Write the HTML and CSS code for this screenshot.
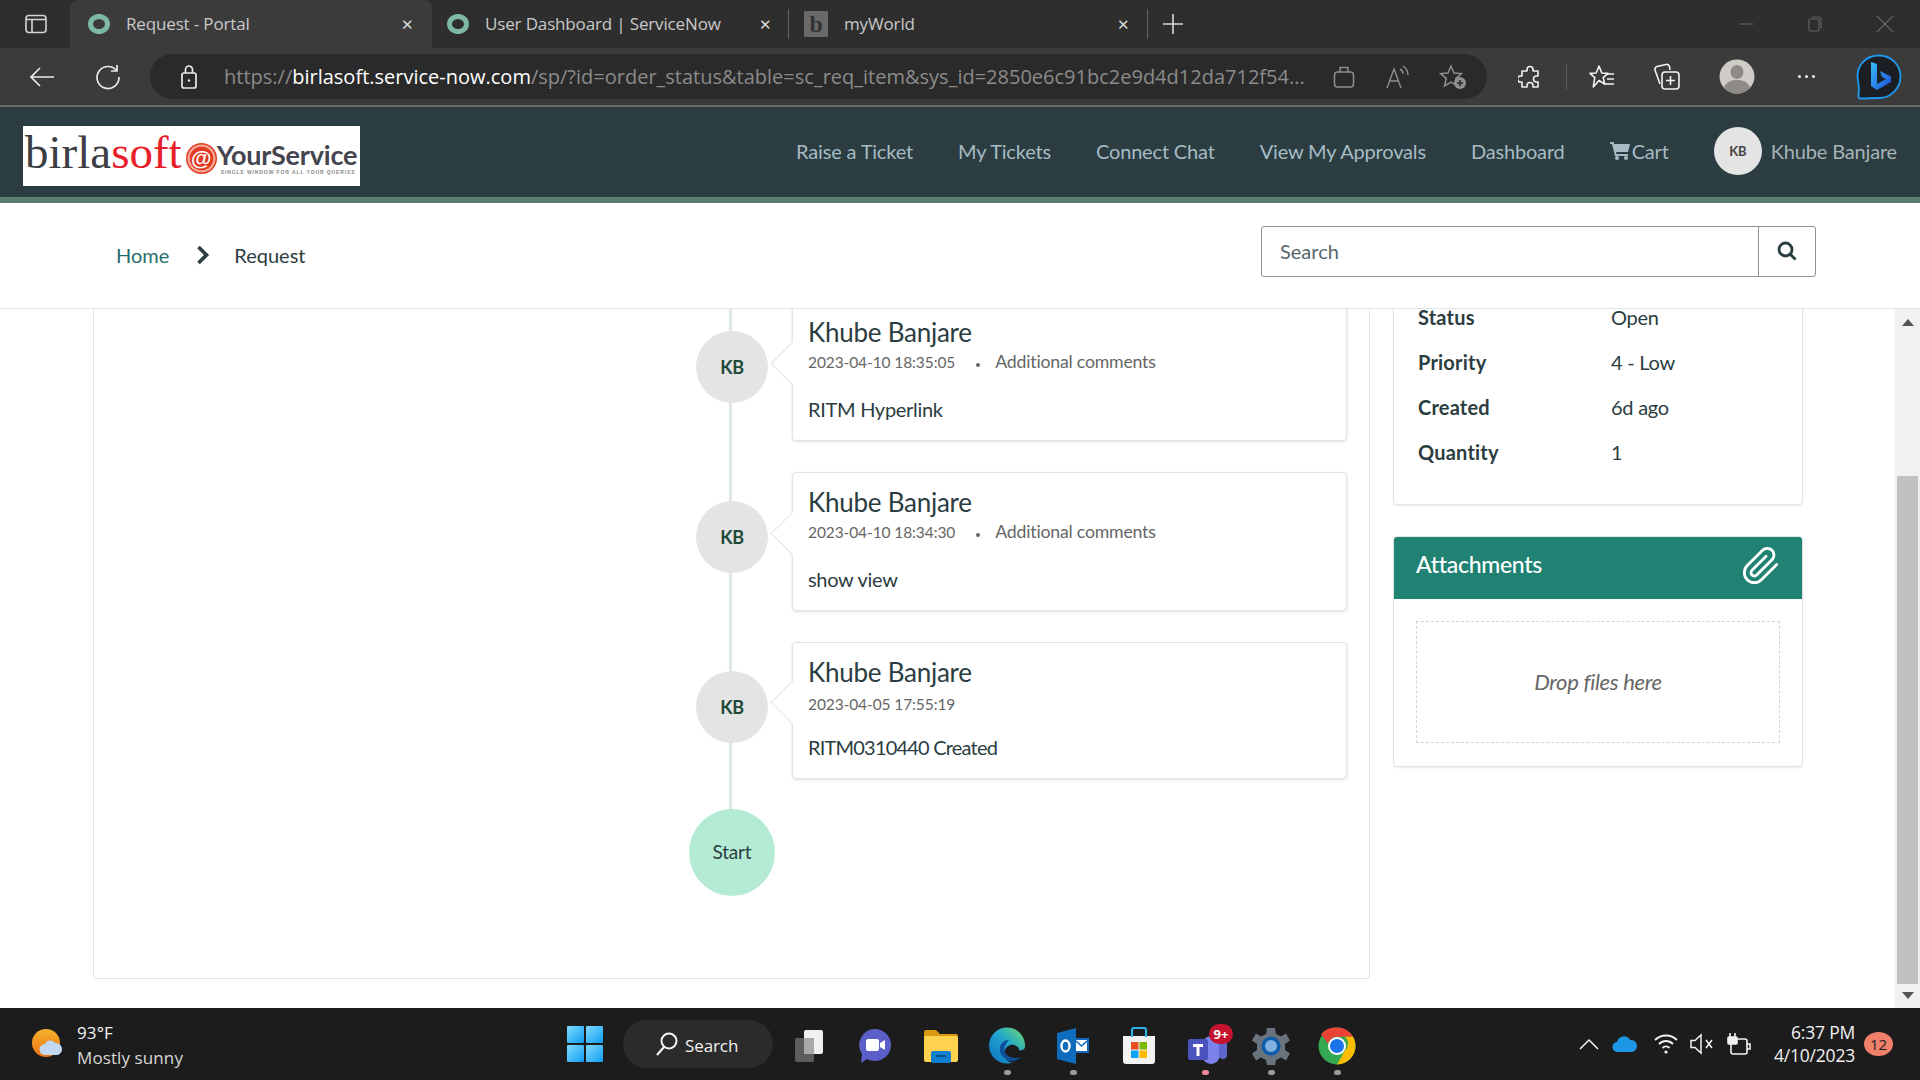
FILE: index.html
```html
<!DOCTYPE html>
<html lang="en">
<head>
<meta charset="utf-8">
<title>Request - Portal</title>
<link rel="stylesheet" href="styles.css">
</head>
<body>
<div class="screen">
  <svg class="defs" width="0" height="0" aria-hidden="true">
    <defs>
      <linearGradient id="gWin" x1="0" y1="0" x2="1" y2="1"><stop offset="0" stop-color="#7fdcff"/><stop offset="1" stop-color="#0f9cf0"/></linearGradient>
      <linearGradient id="gEdge" x1="0" y1="1" x2="1" y2="0"><stop offset="0" stop-color="#0b6fc0"/><stop offset="0.55" stop-color="#22a6cc"/><stop offset="1" stop-color="#6fdc6a"/></linearGradient>
      <linearGradient id="gSun" x1="0" y1="0" x2="0" y2="1"><stop offset="0" stop-color="#f5b32c"/><stop offset="1" stop-color="#ee6f12"/></linearGradient>
      <linearGradient id="gBing" x1="0" y1="0" x2="1" y2="1"><stop offset="0" stop-color="#37bdf8"/><stop offset="1" stop-color="#1d4ed8"/></linearGradient>
    </defs>
  </svg>

  <div class="tabbar">
    <div class="tab-side">
      <svg width="24" height="20" viewBox="0 0 24 20" fill="none" stroke="#d5d5d5" stroke-width="1.6"><rect x="2" y="1.5" width="20" height="17" rx="3"/><path d="M2 5.5h20M8 5.5v13"/></svg>
    </div>
    <div class="tab tab-active">
      <svg class="fav" width="22" height="20" viewBox="0 0 22 20"><ellipse cx="11" cy="10" rx="8.5" ry="7.6" fill="none" stroke="#7db8a4" stroke-width="5"/></svg>
      <span class="tab-title">Request - Portal</span>
      <span class="tab-x">✕</span>
    </div>
    <div class="tab tab-second">
      <svg class="fav" width="22" height="20" viewBox="0 0 22 20"><ellipse cx="11" cy="10" rx="8.5" ry="7.6" fill="none" stroke="#7db8a4" stroke-width="5"/></svg>
      <span class="tab-title">User Dashboard | ServiceNow</span>
      <span class="tab-x">✕</span>
    </div>
    <div class="tab-sep"></div>
    <div class="tab tab-third">
      <span class="fav-b">b</span>
      <span class="tab-title">myWorld</span>
      <span class="tab-x">✕</span>
    </div>
    <div class="tab-sep"></div>
    <svg class="tab-plus" width="22" height="22" viewBox="0 0 22 22" stroke="#d5d5d5" stroke-width="1.6"><path d="M11 1v20M1 11h20"/></svg>
    <div class="winctl">
      <svg width="16" height="16" viewBox="0 0 16 16" stroke="#636363" stroke-width="1.2" fill="none"><path d="M1 8h14"/></svg>
      <svg width="16" height="18" viewBox="0 0 16 18" stroke="#636363" stroke-width="1.2" fill="none"><rect x="2" y="4" width="10" height="12" rx="1.5"/><path d="M5 2h7a2 2 0 0 1 2 2v9"/></svg>
      <svg width="18" height="18" viewBox="0 0 18 18" stroke="#636363" stroke-width="1.2" fill="none"><path d="M1 1l16 16M17 1L1 17"/></svg>
    </div>
  </div>

  <div class="toolbar">
    <svg class="tb-back" width="26" height="22" viewBox="0 0 26 22" fill="none" stroke="#eaeaea" stroke-width="1.7"><path d="M25 11H2M11 2l-9 9 9 9"/></svg>
    <svg class="tb-reload" width="26" height="26" viewBox="0 0 26 26" fill="none" stroke="#eaeaea" stroke-width="1.7"><path d="M21.5 6.5A11 11 0 1 0 24 13"/><path d="M22 1v6h-6"/></svg>
    <div class="address">
      <svg class="lock" width="18" height="24" viewBox="0 0 18 24" fill="none" stroke="#eaeaea" stroke-width="1.7"><rect x="2" y="8" width="14" height="15" rx="2"/><path d="M5.5 8V4.5a3.5 3.5 0 0 1 7 0V8"/><circle cx="9" cy="15.5" r="1.2" fill="#eaeaea" stroke="none"/></svg>
      <div class="url">https://<b>birlasoft.service-now.com</b>/sp/?id=order_status&amp;table=sc_req_item&amp;sys_id=2850e6c91bc2e9d4d12da712f54...</div>
      <div class="addr-icons">
        <svg width="22" height="24" viewBox="0 0 22 24" fill="none" stroke="#8f8f8f" stroke-width="1.5"><rect x="1.5" y="7" width="19" height="15" rx="3"/><path d="M7 7V2.5h8V7"/></svg>
        <svg width="24" height="24" viewBox="0 0 24 24" fill="none" stroke="#8f8f8f" stroke-width="1.4"><path d="M2 23L9 4l7 19M4.5 16h9"/><path d="M15 4c2 1 3 3 3 5M18 1c3 2 5 5 5 9"/></svg>
        <svg width="28" height="26" viewBox="0 0 28 26" fill="none" stroke="#8f8f8f" stroke-width="1.5"><path d="M12 2l3 7 7.500 .6-5.700 4.800 1.800 7.400L12 18l-6.500 4 1.800-7.600L1.500 9.600 9 9z"/><circle cx="21" cy="19" r="6" fill="#8f8f8f" stroke="none"/><path d="M21 16v6M18 19h6" stroke="#2b2b2b" stroke-width="1.6"/></svg>
      </div>
    </div>
    <div class="tb-right">
      <svg class="tb-ext" width="24" height="26" viewBox="0 0 24 26" fill="none" stroke="#f2f2f2" stroke-width="1.6" stroke-linejoin="round"><path d="M9 5.500a3 3 0 0 1 6 0V7h5v5h-1.500a3 3 0 0 0 0 6H20v5h-5v-1.500a3 3 0 0 0-6 0V23H4v-5H2.500a3 3 0 0 1 0-6H4V7h5z"/></svg>
      <div class="tb-sep"></div>
      <svg class="tb-favs" width="26" height="26" viewBox="0 0 26 26" fill="none" stroke="#f2f2f2" stroke-width="1.6" stroke-linejoin="round"><path d="M10 2l2.800 7 6.200 .4-4.800 4.200 1.500 6.400-5.700-3.500L4.300 23l1.500-9.400L1 9.400 7.200 9z"/><path d="M17 10h8M18 15h7M15 20h10"/></svg>
      <svg class="tb-coll" width="28" height="28" viewBox="0 0 28 28" fill="none" stroke="#f2f2f2" stroke-width="1.6"><path d="M7 21L2 7a3 3 0 0 1 2-3.500L13 1.500a3 3 0 0 1 3.500 2L17 7"/><rect x="9" y="9" width="17" height="17" rx="3"/><path d="M17.500 13v9M13 17.500h9"/></svg>
      <svg class="tb-prof" width="36" height="35" viewBox="0 0 36 35"><ellipse cx="18" cy="17.500" rx="17.500" ry="17" fill="#cfccc7"/><ellipse cx="18" cy="13" rx="6.500" ry="7" fill="#8e8b86"/><path d="M5 28c3-6 8-7 13-7s10 1 13 7c-3 4-8 7-13 7s-10-3-13-7z" fill="#8e8b86"/></svg>
      <div class="tb-dots"><i></i><i></i><i></i></div>
      <svg class="tb-bing" width="46" height="46" viewBox="0 0 46 46"><path d="M23 1.500C10 1.500 1.500 11 1.500 22c0 6 2.500 9 1 19-.3 3 0 3.500 3 3.500C12 44.500 16 44 23 44 35 44 44.500 34 44.500 22.500S35 1.500 23 1.500z" fill="#1b1f24" stroke="#1d9bf0" stroke-width="1.800"/><path d="M15 8l6 2v20l9-5-4-2-2-6 11 5.500v5.500l-14 8-6-4z" fill="url(#gBing)"/></svg>
    </div>
  </div>

  <header class="nav">
    <a class="logo">
      <span class="logo-birla">birla<em>soft</em></span>
      <span class="logo-at">@</span>
      <span class="logo-right">
        <span class="logo-ys">YourService</span>
        <span class="logo-tag">SINGLE WINDOW FOR ALL YOUR QUERIES</span>
      </span>
    </a>
    <nav class="nav-links">
      <a>Raise a Ticket</a>
      <a>My Tickets</a>
      <a>Connect Chat</a>
      <a>View My Approvals</a>
      <a>Dashboard</a>
      <a class="nav-cart"><svg width="20" height="18" viewBox="0 0 20 18" fill="#a6bbc4"><path d="M0 0h3.500l.6 2H20l-2 8H6l.5 2H18v2H5L2 2H0z"/><circle cx="7" cy="16" r="2"/><circle cx="16" cy="16" r="2"/></svg>Cart</a>
      <a class="nav-user"><span class="nav-avatar">KB</span>Khube Banjare</a>
    </nav>
  </header>

  <div class="subhead">
    <div class="crumbs">
      <a class="crumb-home">Home</a>
      <svg width="14" height="20" viewBox="0 0 14 20" fill="none" stroke="#2b3d41" stroke-width="3.600"><path d="M2.500 2l8 8-8 8"/></svg>
      <span class="crumb-cur">Request</span>
    </div>
    <div class="search">
      <span class="search-input">Search</span>
      <span class="search-btn"><svg width="20" height="20" viewBox="0 0 20 20" fill="none" stroke="#2b3d41" stroke-width="2.800"><circle cx="8.500" cy="8.500" r="6.500"/><path d="M13.500 13.500l5 5"/></svg></span>
    </div>
  </div>

  <div class="viewport">
    <main class="scroller">
      <div class="columns">
        <section class="panel">
          <div class="timeline">
            <article class="entry">
              <div class="avatar">KB</div>
              <div class="card">
                <h3>Khube Banjare</h3>
                <div class="meta"><span class="stamp">2023-04-10 18:35:05</span><i class="dot"></i><span>Additional comments</span></div>
                <p>RITM Hyperlink</p>
              </div>
            </article>
            <article class="entry">
              <div class="avatar">KB</div>
              <div class="card">
                <h3>Khube Banjare</h3>
                <div class="meta"><span class="stamp">2023-04-10 18:34:30</span><i class="dot"></i><span>Additional comments</span></div>
                <p>show view</p>
              </div>
            </article>
            <article class="entry entry-last">
              <div class="avatar">KB</div>
              <div class="card card-short">
                <h3>Khube Banjare</h3>
                <div class="meta"><span class="stamp">2023-04-05 17:55:19</span></div>
                <p>RITM0310440 Created</p>
              </div>
            </article>
            <div class="start">Start</div>
          </div>
        </section>
        <aside class="side">
          <section class="box details">
            <div class="row"><b>Status</b><span>Open</span></div>
            <div class="row"><b>Priority</b><span>4 - Low</span></div>
            <div class="row"><b>Created</b><span>6d ago</span></div>
            <div class="row"><b>Quantity</b><span>1</span></div>
          </section>
          <section class="box attach">
            <div class="attach-head">
              <span>Attachments</span>
              <svg width="40" height="40" viewBox="0 0 24 24" fill="none" stroke="#fff" stroke-width="1.700" stroke-linecap="round" stroke-linejoin="round"><path d="M21.440 11.050l-9.190 9.190a6 6 0 0 1-8.490-8.490l9.190-9.190a4 4 0 0 1 5.660 5.660l-9.200 9.190a2 2 0 0 1-2.830-2.830l8.490-8.480"/></svg>
            </div>
            <div class="attach-body"><div class="drop">Drop files here</div></div>
          </section>
        </aside>
      </div>
    </main>
    <div class="scrollbar">
      <i class="sb-up"></i>
      <div class="sb-track"><div class="sb-thumb"></div></div>
      <i class="sb-down"></i>
    </div>
  </div>

  <footer class="taskbar">
    <div class="weather">
      <svg width="34" height="32" viewBox="0 0 34 32"><circle cx="15" cy="15" r="14" fill="url(#gSun)"/><path d="M14 27a5.500 5.500 0 0 1 0-11c1-4 8-5 10-1 5 0 7 3 7 6.500S28 27 25 27z" fill="#c3d9f2"/></svg>
      <div class="weather-txt"><span>93°F</span><span class="w-sub">Mostly sunny</span></div>
    </div>
    <div class="tb-center">
      <svg class="win" width="36" height="36" viewBox="0 0 36 36" fill="url(#gWin)"><rect width="17" height="17" rx="1"/><rect x="19" width="17" height="17" rx="1"/><rect y="19" width="17" height="17" rx="1"/><rect x="19" y="19" width="17" height="17" rx="1"/></svg>
      <div class="task-search">
        <svg width="24" height="26" viewBox="0 0 24 26" fill="none" stroke="#f5f5f5" stroke-width="2"><circle cx="14" cy="10" r="7.500"/><path d="M9 16l-7 8"/></svg>
        <span>Search</span>
      </div>
      <div class="slot"><svg width="30" height="34" viewBox="0 0 30 34"><rect x="1" y="9" width="19" height="24" rx="2" fill="#5d5d5d"/><rect x="10" y="1" width="19" height="24" rx="2" fill="#f1f1f1"/><rect x="10" y="9" width="10" height="16" fill="#a9a9a9"/></svg></div>
      <div class="slot"><svg width="34" height="36" viewBox="0 0 34 36"><path d="M17 1a16 16 0 0 1 0 32c-3 0-6-1-8-2l-6 4 1-9A16 16 0 0 1 17 1z" fill="#5b5fc7"/><rect x="8" y="11" width="13" height="12" rx="2" fill="#fff"/><path d="M22 15l5-3v10l-5-3z" fill="#fff"/></svg></div>
      <div class="slot"><svg width="36" height="34" viewBox="0 0 36 34"><path d="M1 3a2 2 0 0 1 2-2h10l4 4h16a2 2 0 0 1 2 2v4H1z" fill="#d79a10"/><rect x="1" y="7" width="34" height="26" rx="2" fill="#fcd24f"/><rect x="8" y="22" width="20" height="12" rx="2" fill="#0f7fd0"/><path d="M13 27h10" stroke="#0b4f88" stroke-width="2"/></svg></div>
      <div class="slot slot-on"><svg width="36" height="37" viewBox="0 0 36 37"><circle cx="18" cy="18.500" r="18" fill="url(#gEdge)"/><path d="M16 23c1-3 5-6 9-5 4 1 5 3 5 5 2 1 4 0 6-2 0 4-1 8-3 11-3 4-11 5-14 2-3-2-4-8-3-11z" fill="#1c1c1c"/><path d="M20 13c-6 0-10 5-9 11 1 6 7 11 14 10 3-1 5-2 7-4-5 2-11 1-14-2-3-3-4-7-1-11 1-2 2-3 3-4z" fill="#0e4f9a"/></svg><i></i></div>
      <div class="slot slot-on"><svg width="34" height="38" viewBox="0 0 34 38"><path d="M1 6L20 1v36L1 32z" fill="#0f6cbd"/><rect x="18" y="11" width="15" height="15" fill="#0f6cbd"/><path d="M20 13h11v11H20z" fill="#fff"/><path d="M20 14l5.500 5 5.500-5" fill="none" stroke="#0f6cbd" stroke-width="1.600"/><ellipse cx="9.500" cy="19" rx="4" ry="5.500" fill="none" stroke="#fff" stroke-width="2.400"/></svg><i></i></div>
      <div class="slot"><svg width="36" height="38" viewBox="0 0 36 38"><path d="M2 9h32v25a3 3 0 0 1-3 3H5a3 3 0 0 1-3-3z" fill="#f2f2f2"/><path d="M11 10V3a2 2 0 0 1 2-2h10a2 2 0 0 1 2 2v7" fill="none" stroke="#2bb3e8" stroke-width="2.200"/><rect x="10" y="15" width="7.500" height="7.500" fill="#e84c23"/><rect x="18.500" y="15" width="7.500" height="7.500" fill="#7db800"/><rect x="10" y="23.500" width="7.500" height="7.500" fill="#0ca4ef"/><rect x="18.500" y="23.500" width="7.500" height="7.500" fill="#fbb900"/></svg></div>
      <div class="slot slot-pink">
        <svg class="teams" width="46" height="42" viewBox="0 0 46 42"><circle cx="30" cy="10" r="6" fill="#7b83eb"/><rect x="16" y="11" width="18" height="28" rx="9" fill="#7b83eb"/><rect x="33" y="14" width="8" height="20" rx="4" fill="#5f66c9"/><rect x="2" y="14" width="20" height="21" rx="2" fill="#4b53bc"/><path d="M7 19h10v3h-3.500v9h-3v-9H7z" fill="#fff"/></svg>
        <span class="badge-red">9+</span><i></i>
      </div>
      <div class="slot slot-on"><svg width="38" height="38" viewBox="0 0 38 38"><path d="M15 1h8l1 6 5 2.500 5-3 4 7-5 3.500v6l5 3.500-4 7-5-3-5 2.500-1 6h-8l-1-6-5-2.500-5 3-4-7 5-3.500v-6l-5-3.500 4-7 5 3 5-2.500z" fill="#69737d"/><circle cx="19" cy="19" r="9.500" fill="#0f5cab"/><circle cx="19" cy="19" r="6" fill="#7fb1e2"/></svg><i></i></div>
      <div class="slot slot-on"><svg width="38" height="38" viewBox="0 0 38 38"><circle cx="19" cy="19" r="18.500" fill="#34a853"/><path d="M19 .5a18.500 18.500 0 0 1 16 9.300H19a9.300 9.300 0 0 0-9 7L3 7A18.500 18.500 0 0 1 19 .5z" fill="#ea4335"/><path d="M35 9.800A18.500 18.500 0 0 1 19 37.500l8-14a9.300 9.300 0 0 0 0-13.700z" fill="#fbbc04"/><circle cx="19" cy="19" r="9" fill="#fff"/><circle cx="19" cy="19" r="7" fill="#1a73e8"/></svg><i></i></div>
    </div>
    <div class="tray">
      <svg class="tray-up" width="20" height="12" viewBox="0 0 20 12" fill="none" stroke="#f2f2f2" stroke-width="1.500"><path d="M1 11l9-9 9 9"/></svg>
      <svg class="tray-cloud" width="26" height="18" viewBox="0 0 26 18"><path d="M6 17a5 5 0 0 1-1-10 7 7 0 0 1 13-2 6 6 0 0 1 2 12z" fill="#1e96e8"/></svg>
      <svg class="tray-wifi" width="24" height="22" viewBox="0 0 24 22" fill="none" stroke="#f2f2f2" stroke-width="1.800"><path d="M1 7c6-6 16-6 22 0M5 11c4-4 10-4 14 0M8.500 15c2-2 5-2 7 0"/><circle cx="12" cy="19" r="1.600" fill="#f2f2f2" stroke="none"/></svg>
      <svg class="tray-vol" width="24" height="22" viewBox="0 0 24 22" fill="none" stroke="#f2f2f2" stroke-width="1.500"><path d="M1 7.500h4L11 2v18l-6-5.500H1z"/><path d="M16 7l6 8M22 7l-6 8"/></svg>
      <svg width="26" height="24" viewBox="0 0 26 24" fill="none" stroke="#f2f2f2" stroke-width="1.600"><rect x="6" y="7" width="16" height="15" rx="2"/><path d="M22 12h3v5h-3"/><path d="M5 1v4M10 1v4" /><rect x="3" y="5" width="9" height="7" rx="1" fill="#f2f2f2"/></svg>
      <div class="clock"><span>6:37 PM</span><span>4/10/2023</span></div>
      <span class="notif">12</span>
    </div>
  </footer>
</div>
</body>
</html>
```
FILE: styles.css
```css
* { box-sizing: border-box; }
html, body { margin: 0; padding: 0; }
body { width: 1920px; height: 1080px; overflow: hidden; font-family: "Lato", "Noto Sans", sans-serif; background: #fff; color: #2b3d41; }
.screen { width: 1920px; height: 1080px; display: flex; flex-direction: column; overflow: hidden; }
.defs { position: absolute; }

/* browser tabs */
.tabbar { height: 48px; flex: none; display: flex; align-items: center; background: #2e2e2e; font-family: "Open Sans", "Noto Sans", sans-serif; font-size: 17px; letter-spacing: -0.15px; color: #c9c9c9; }
.tab-side { width: 70px; padding-left: 24px; display: flex; align-items: center; }
.tab { height: 48px; width: 356px; display: flex; align-items: center; padding: 0 16px 0 18px; }
.tab-active { width: 362px; padding-right: 18px; background: #3b3b3b; border-radius: 8px 8px 0 0; }
.tab-second { padding-left: 15px; }
.tab-third { width: 358px; padding-left: 15px; padding-right: 17px; }
.tab .fav { margin-right: 16px; flex: none; }
.tab-title { flex: 1; white-space: nowrap; margin-bottom: 2px; }
.tab-x { font-size: 15px; color: #d8d8d8; flex: none; }
.tab-sep { width: 1px; height: 30px; background: #666; flex: none; }
.fav-b { width: 24px; height: 26px; margin-right: 16px; background: #6a6a6a; color: #333; font: 700 24px/26px "Liberation Serif", serif; text-align: center; flex: none; }
.tab-plus { margin-left: 14px; }
.winctl { margin-left: auto; display: flex; align-items: center; gap: 53px; padding-right: 26px; }

/* browser toolbar */
.toolbar { height: 57px; flex: none; display: flex; align-items: center; background: #3b3b3b; padding-right: 20px; border: 0; }
.tb-back { margin-left: 29px; flex: none; }
.tb-reload { margin-left: 40px; flex: none; }
.address { margin-left: 29px; width: 1337px; height: 45px; flex: none; display: flex; align-items: center; background: #2a2a2a; border-radius: 23px; padding-left: 30px; }
.lock { flex: none; }
.url { width: 1083px; flex: none; margin-left: 26px; font-family: "Open Sans", "Noto Sans", sans-serif; font-size: 20px; letter-spacing: 0; color: #8b8b8b; white-space: nowrap; overflow: hidden; }
.url b { font-weight: 400; color: #fff; }
.addr-icons { display: flex; align-items: center; gap: 30px; margin-left: 26px; }
.tb-right { flex: 1; display: flex; align-items: center; padding-left: 31px; }
.tb-sep { width: 1px; height: 26px; background: #5c5c5c; margin: 0 22px 0 24px; }
.tb-coll { margin-left: 38px; }
.tb-prof { margin-left: 38px; }
.tb-dots { display: flex; gap: 4px; margin-left: 43px; }
.tb-dots i { width: 3px; height: 3px; border-radius: 50%; background: #f2f2f2; }
.tb-bing { margin-left: 41px; }

/* site nav */
.nav { height: 98px; flex: none; display: flex; align-items: center; justify-content: space-between; background: #2b3d41; border-top: 2px solid #6b6b6b; border-bottom: 6px solid #5a7d6f; padding: 0 23px 0 23px; }
.logo { width: 337px; height: 60px; margin-top: 8px; background: #fff; display: flex; align-items: center; padding-left: 2px; overflow: hidden; }
.logo-birla { font: 400 47px/60px "Liberation Serif", serif; color: #3d3d44; margin-top: -8px; }
.logo-birla em { font-style: normal; color: #e8202a; }
.logo-at { width: 31px; height: 31px; margin-left: 4px; margin-top: 4px; flex: none; border-radius: 50%; background: radial-gradient(circle, #e33b22 52%, #f4a390 55%, #f4a390 62%, #e33b22 66%); color: #fff; font: 700 21px/30px "Liberation Sans", sans-serif; text-align: center; }
.logo-right { display: flex; flex-direction: column; margin-top: 3px; }
.logo-ys { font: 700 27px/28px "Lato", sans-serif; letter-spacing: -0.2px; color: #45454f; }
.logo-tag { font: 700 5px/6px "Liberation Sans", sans-serif; letter-spacing: 0.9px; color: #888; padding-left: 4px; white-space: nowrap; }
.nav-links { display: flex; align-items: center; gap: 45px; padding-bottom: 2px; font-size: 20px; letter-spacing: -0.17px; color: #a6bbc4; white-space: nowrap; }
.nav-links a { display: flex; align-items: center; }
.nav-cart svg { margin-right: 2px; }
.nav-user { color: #a6b4b8; margin-left: 0; }
.nav-avatar { width: 48px; height: 48px; margin-right: 9px; border-radius: 50%; background: #e4e4e4; color: #444; font-size: 13px; font-weight: 700; display: flex; align-items: center; justify-content: center; }

/* breadcrumb: sits over the top edge of the scrolled area */
.subhead { position: relative; z-index: 1; height: 106px; flex: none; display: flex; align-items: center; justify-content: space-between; background: #fff; border-bottom: 1px solid #dfe6e6; padding: 0 104px 0 116px; }
.crumbs { display: flex; align-items: center; padding-bottom: 2px; font-size: 20px; letter-spacing: 0; }
.crumb-home { color: #1f6e6a; }
.crumbs svg { margin: 0 24px 0 27px; }
.crumb-cur { color: #2b3d41; }
.search { width: 555px; height: 51px; display: flex; border: 1px solid #8a9599; border-radius: 3px; margin-top: -9px; }
.search-input { flex: 1; padding-left: 18px; font-size: 20px; line-height: 49px; letter-spacing: 0; color: #55676b; }
.search-btn { width: 57px; border-left: 1px solid #8a9599; display: flex; align-items: center; justify-content: center; }

/* scrolled content */
.viewport { height: 707px; margin-top: -8px; flex: none; display: flex; overflow: hidden; background: #fff; }
.scroller { flex: 1; overflow: hidden; padding-left: 93px; }
.columns { display: flex; align-items: flex-start; gap: 23px; margin-top: -21px; }
.panel { width: 1277px; background: #fff; border: 1px solid #dfe6e6; border-radius: 4px; padding: 21px 22px 82px 595px; }
.timeline { position: relative; display: flex; flex-direction: column; gap: 31px; }
.timeline::before { content: ""; position: absolute; left: 40px; top: 0; bottom: 40px; width: 3px; background: #dfe8e8; }
.entry { display: flex; align-items: flex-start; position: relative; }
.entry-last { margin-bottom: -1px; }
.avatar { width: 72px; height: 72px; margin: 29px 14px 0 7px; flex: none; border-radius: 50%; background: #e4e4e4; color: #1f4a3a; font-size: 18px; font-weight: 700; letter-spacing: -0.4px; display: flex; align-items: center; justify-content: center; position: relative; }
.card { position: relative; margin-left: 10px; width: 556px; height: 139px; background: #fff; border: 1px solid #dfe6e6; border-radius: 4px; box-shadow: 0 1px 3px rgba(0, 0, 0, .12); padding: 14px 15px 15px 15px; }
.card::before { content: ""; position: absolute; left: -16px; top: 45px; width: 30px; height: 30px; background: #fff; border-left: 1px solid #dfe6e6; border-bottom: 1px solid #dfe6e6; transform: rotate(45deg); }
.card h3 { position: relative; margin: 0; font-size: 26px; font-weight: 400; line-height: 30px; letter-spacing: -0.25px; color: #2b3d41; }
.meta { position: relative; display: flex; align-items: center; margin-top: 5px; font-size: 17.7px; line-height: 20px; letter-spacing: -0.2px; color: #666; }
.stamp { font-size: 15.5px; letter-spacing: -0.1px; }
.dot { width: 4px; height: 4px; margin: 5px 15px 0 21px; border-radius: 50%; background: #666; }
.card p { position: relative; margin: 24px 0 0; font-size: 20px; line-height: 26px; letter-spacing: -0.3px; color: #2b3d41; }
.card-short { height: 137px; }
.card-short::before { top: 44px; }
.card-short .meta { margin-top: 7px; }
.card-short p { margin-top: 20px; letter-spacing: -0.8px; }
.start { position: relative; width: 86px; height: 87px; padding-bottom: 2px; border-radius: 50%; background: #b5ebd5; color: #2b3d41; font-size: 19px; letter-spacing: -0.2px; display: flex; align-items: center; justify-content: center; }

/* right column */
.side { width: 410px; flex: none; display: flex; flex-direction: column; gap: 31px; }
.box { background: #fff; border: 1px solid #dfe6e6; border-radius: 4px; box-shadow: 0 1px 2px rgba(0, 0, 0, .08); overflow: hidden; }
.details { padding: 13px 24px 30px; }
.row { height: 45px; display: flex; align-items: center; font-size: 20px; line-height: 18px; letter-spacing: -0.25px; color: #2b3d41; }
.row b { width: 193px; font-weight: 700; letter-spacing: 0.2px; }
.attach-head { height: 62px; display: flex; align-items: center; justify-content: space-between; background: #1f8272; color: #fff; font-size: 23px; font-weight: 700; letter-spacing: -0.3px; padding: 0 21px 4px 22px; }
.attach-head span { font-weight: 500; margin-bottom: 5px; }
.attach-body { padding: 22px 22px 23px 22px; }
.drop { height: 122px; padding-bottom: 2px; border: 1px dashed #d4d4d4; display: flex; align-items: center; justify-content: center; font-size: 22px; font-style: italic; letter-spacing: -0.3px; color: #666; }

/* page scrollbar */
.scrollbar { width: 25px; margin-top: 8px; flex: none; display: flex; flex-direction: column; align-items: center; background: #f1f1f1; }
.sb-up { margin-top: 10px; border: 6px solid transparent; border-top: 0; border-bottom: 7px solid #555; }
.sb-track { flex: 1; width: 100%; padding: 150px 2px 0; }
.sb-thumb { width: 21px; height: 508px; background: #c1c1c1; }
.sb-down { margin-bottom: 9px; border: 6px solid transparent; border-bottom: 0; border-top: 7px solid #555; }

/* windows taskbar */
.taskbar { height: 72px; flex: none; display: flex; align-items: center; background: #1c1c1c; color: #f2f2f2; font-family: "Open Sans", "Noto Sans", sans-serif; }
.weather { width: 567px; padding-left: 31px; display: flex; align-items: center; gap: 12px; }
.weather-txt { display: flex; flex-direction: column; padding-top: 2px; font-size: 17px; line-height: 25px; letter-spacing: 0.1px; }
.w-sub { color: #d8d8d8; }
.tb-center { display: flex; align-items: center; }
.win { margin-right: 20px; flex: none; }
.task-search { width: 150px; height: 48px; margin-right: 3px; display: flex; align-items: center; gap: 6px; padding-left: 32px; background: #2b2b2b; border-radius: 24px; font-size: 17px; letter-spacing: -0.1px; }
.task-search span { padding-top: 2px; }
.slot { position: relative; width: 66px; height: 72px; display: flex; align-items: center; justify-content: center; padding-top: 3px; }
.slot i { display: none; }
.slot-on i, .slot-pink i { display: block; position: absolute; bottom: 5px; left: 30px; width: 7px; height: 5px; border-radius: 3px; background: #9b9b9b; }
.slot-pink i { background: #f08a9a; }
.teams { margin-left: 8px; }
.badge-red { position: absolute; left: 37px; top: 16px; min-width: 24px; height: 20px; border-radius: 10px; background: #c4122f; color: #fff; font-size: 13px; font-weight: 700; line-height: 20px; text-align: center; }
.tray { margin-left: auto; display: flex; align-items: center; padding-right: 27px; }
.tray > svg { margin-right: 14px; }
.tray > .tray-up { margin-left: 2px; margin-right: 13px; }
.tray > .tray-cloud { margin-right: 16px; }
.tray > .tray-wifi { margin-right: 12px; }
.tray > .tray-vol { margin-right: 11px; }
.clock { width: 85px; margin-left: 5px; display: flex; flex-direction: column; align-items: flex-end; font-size: 17.5px; line-height: 23px; letter-spacing: -0.2px; }
.notif { width: 29px; height: 24px; margin-left: 9px; border-radius: 50%; background: #f0806a; color: #222; font-size: 15px; line-height: 24px; text-align: center; }
```
